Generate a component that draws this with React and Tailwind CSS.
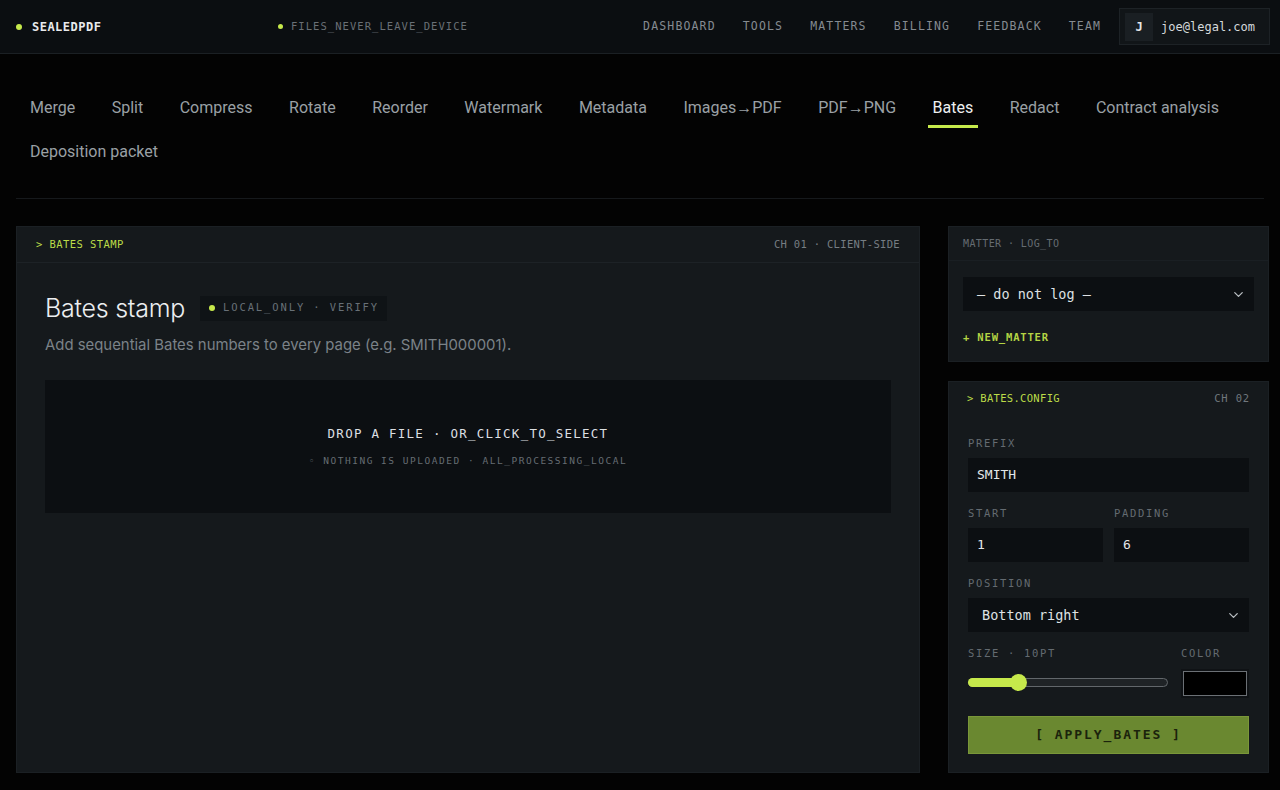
import { ChevronDown } from 'lucide-react';

const mono = "font-['DejaVu_Sans_Mono',monospace]";

const navLinks = ['DASHBOARD', 'TOOLS', 'MATTERS', 'BILLING', 'FEEDBACK', 'TEAM'];

const tools = [
    'Merge', 'Split', 'Compress', 'Rotate', 'Reorder', 'Watermark', 'Metadata',
    'Images→PDF', 'PDF→PNG', 'Bates', 'Redact', 'Contract analysis', 'Deposition packet',
];

function Field({ label, children }) {
    return (
        <div className="flex flex-col">
            <span className={`${mono} mb-[8px] h-[14px] text-[10.5px] leading-[14px] tracking-[0.16em] text-[#646b71]`}>{label}</span>
            {children}
        </div>
    );
}

function Input({ value }) {
    return (
        <div className={`${mono} flex h-[34px] items-center bg-[#0c0f12] px-[9px] text-[13px] text-[#e3e6e8]`}>
            {value}
        </div>
    );
}

function Select({ value }) {
    return (
        <div className={`${mono} flex h-[34px] items-center justify-between bg-[#0c0f12] pl-[14px] pr-[8px] text-[13.5px] text-[#dfe2e4]`}>
            <span>{value}</span>
            <ChevronDown className="h-[15px] w-[15px] text-[#b9bec2]" strokeWidth={2} />
        </div>
    );
}

export default function App() {
    return (
        <div className="min-h-screen w-full bg-[#030303] font-['Roboto',sans-serif]">
            {/* top bar */}
            <header className="flex h-[54px] items-center border-b border-[#1b2024] bg-[#0b0e11] pl-4 pr-[10px]">
                <div className="flex w-[262px] items-center gap-[10px]">
                    <span className="h-[6px] w-[6px] rounded-full bg-[#c6e94b]" />
                    <span className={`${mono} text-[12px] font-bold tracking-[0.04em] text-[#e8eaec]`}>SEALEDPDF</span>
                </div>
                <div className="flex items-center gap-[8px]">
                    <span className="h-[5px] w-[5px] rounded-full bg-[#c6e94b]" />
                    <span className={`${mono} text-[10.5px] tracking-[0.1em] text-[#6a7076]`}>FILES_NEVER_LEAVE_DEVICE</span>
                </div>
                <nav className="ml-auto flex items-center gap-[27px]">
                    {navLinks.map((l) => (
                        <span key={l} className={`${mono} text-[11.5px] tracking-[0.1em] text-[#858b91]`}>{l}</span>
                    ))}
                </nav>
                <div className="ml-[18px] flex h-[37px] items-center gap-[8px] border border-[#1d2226] bg-[#111518] pl-[5px] pr-[14px]">
                    <span className={`${mono} flex h-[28px] w-[28px] items-center justify-center bg-[#1a1f23] text-[12px] font-bold text-[#e3e6e8]`}>J</span>
                    <span className={`${mono} text-[12px] text-[#d5d9dc]`}>joe@legal.com</span>
                </div>
            </header>

            {/* tool tabs */}
            <div className="mx-4 flex flex-wrap gap-x-[26.5px] gap-y-[12px] border-b border-[#16191c] px-[9px] pb-[26px] pt-[42px]">
                {tools.map((t) => (
                    <span
                        key={t}
                        className={
                            t === 'Bates'
                                ? 'border-b-[3px] border-[#c6e94b] px-[5px] pb-[5px] text-[16px] leading-[24px] text-[#eef0f1]'
                                : 'border-b-[3px] border-transparent px-[5px] pb-[5px] text-[16px] leading-[24px] text-[#9aa0a5]'
                        }
                    >
                        {t}
                    </span>
                ))}
            </div>

            <main className="flex gap-[28px] pb-[18px] pl-4 pr-[11px] pt-[27px]">
                {/* main panel */}
                <section className="flex h-[547px] flex-1 flex-col border border-[#1b2024] bg-[#15191c]">
                    <div className="flex h-[36px] items-center justify-between border-b border-[#1d2226] px-[19px]">
                        <span className={`${mono} text-[10.5px] tracking-[0.04em] text-[#bcdc48]`}>&gt; BATES STAMP</span>
                        <span className={`${mono} text-[10.5px] tracking-[0.03em] text-[#767d83]`}>CH 01 · CLIENT-SIDE</span>
                    </div>
                    <div className="px-[28px] pt-[29px]">
                        <div className="flex items-center gap-[15px]">
                            <h1 className="font-['Inter',sans-serif] text-[25px] font-light leading-[32px] tracking-[-0.01em] text-[#eceef0]">Bates stamp</h1>
                            <span className="flex h-[25px] items-center gap-[8px] bg-[#0f1316] pl-[9px] pr-[8px]">
                                <span className="h-[6px] w-[6px] rounded-full bg-[#c6e94b]" />
                                <span className={`${mono} text-[10.5px] tracking-[0.18em] text-[#687077]`}>LOCAL_ONLY · VERIFY</span>
                            </span>
                        </div>
                        <p className="mt-[10px] font-['Inter',sans-serif] text-[14.9px] leading-[22px] text-[#7b8288]">
                            Add sequential Bates numbers to every page (e.g. SMITH000001).
                        </p>
                        <div className="mt-[24px] flex h-[133px] flex-col items-center justify-center gap-[10px] bg-[#0c0f12]">
                            <span className={`${mono} text-[12.5px] tracking-[0.1em] text-[#dcdfe2]`}>DROP A FILE · OR_CLICK_TO_SELECT</span>
                            <span className={`${mono} text-[9.5px] tracking-[0.16em] text-[#666d73]`}>◦ NOTHING IS UPLOADED · ALL_PROCESSING_LOCAL</span>
                        </div>
                    </div>
                </section>

                {/* right column */}
                <aside className="flex w-[321px] flex-col gap-[19px]">
                    <div className="border border-[#1b2024] bg-[#15191c] pb-[16px]">
                        <div className="flex h-[34px] items-center border-b border-[#1a1f23] px-[14px]">
                            <span className={`${mono} text-[10px] tracking-[0.04em] text-[#656c72]`}>MATTER · LOG_TO</span>
                        </div>
                        <div className="px-[14px] pt-[16px]">
                            <Select value="— do not log —" />
                            <div className={`${mono} mt-[18px] text-[10.5px] font-bold leading-[16px] tracking-[0.08em] text-[#b4d444]`}>+ NEW_MATTER</div>
                        </div>
                    </div>

                    <div className="flex-1 border border-[#1b2024] bg-[#15191c] pb-[18px]">
                        <div className="flex h-[34px] items-center justify-between px-[18px]">
                            <span className={`${mono} text-[10.5px] tracking-[0.03em] text-[#bcdc48]`}>&gt; BATES.CONFIG</span>
                            <span className={`${mono} text-[10.5px] tracking-[0.08em] text-[#70777d]`}>CH 02</span>
                        </div>
                        <div className="flex flex-col gap-[14px] px-[19px] pt-[20px]">
                            <Field label="PREFIX"><Input value="SMITH" /></Field>
                            <div className="grid grid-cols-2 gap-[11px]">
                                <Field label="START"><Input value="1" /></Field>
                                <Field label="PADDING"><Input value="6" /></Field>
                            </div>
                            <Field label="POSITION"><Select value="Bottom right" /></Field>
                            <div className="flex gap-[13px]">
                                <div className="flex flex-1 flex-col">
                                    <span className={`${mono} h-[14px] text-[10.5px] leading-[14px] tracking-[0.16em] text-[#646b71]`}>SIZE · 10PT</span>
                                    <div className="relative mt-[9px] flex h-[27px] items-center">
                                        <div className="h-[9px] w-full rounded-full border border-[#62676b] bg-[#1f2326]" />
                                        <div className="absolute left-0 top-[9px] h-[9px] w-[52px] rounded-full bg-[#c6e94b]" />
                                        <div className="absolute left-[42px] top-[5px] h-[17px] w-[17px] rounded-full bg-[#c6e94b]" />
                                    </div>
                                </div>
                                <div className="flex w-[68px] flex-col">
                                    <span className={`${mono} h-[14px] text-[10.5px] leading-[14px] tracking-[0.16em] text-[#646b71]`}>COLOR</span>
                                    <div className="mt-[9px] flex h-[29px] items-center justify-center bg-[#0f1215] p-[2px]">
                                        <div className="h-full w-full border border-[#6b7075] bg-black" />
                                    </div>
                                </div>
                            </div>
                            <button className={`${mono} mt-[4px] h-[38px] border border-[#7a9739] bg-[#6a8830] text-[13px] font-bold tracking-[0.15em] text-[#1b230c]`}>
                                [ APPLY_BATES ]
                            </button>
                        </div>
                    </div>
                </aside>
            </main>
        </div>
    );
}
